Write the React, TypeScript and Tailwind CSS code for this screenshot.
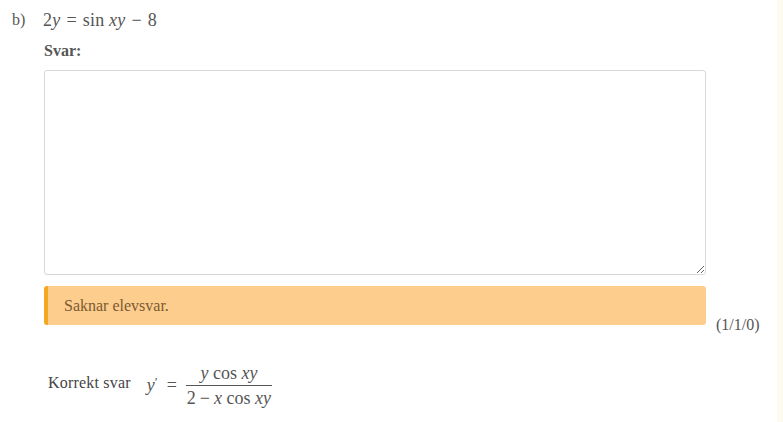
import React from "react";

const serif = { fontFamily: '"Liberation Serif", "Times New Roman", serif' };

function I({ children }: { children: React.ReactNode }) {
  return <span className="italic">{children}</span>;
}

export default function App() {
  return (
    <div className="flex h-[422px] w-[783px] bg-white text-[#555]" style={serif}>
      <div className="flex-1 flex flex-col">
        <div className="flex items-center pt-[8px] h-[32px]">
          <span className="ml-[12px] w-[31px] text-[16px] leading-[24px] text-[#555]">b)</span>
          <span className="text-[18px] leading-[24px] text-[#555] tracking-[0.2px]">
            2<I>y</I>
            <span className="mx-[6px]">=</span>
            sin <I>xy</I>
            <span className="mx-[6px]">−</span>8
          </span>
        </div>
        <div className="ml-[44px] mt-[9px] text-[16px] leading-[20px] font-bold text-[#555]">Svar:</div>
        <div className="ml-[44px] mt-[9px] w-[662px]">
          <textarea
            className="block w-[662px] h-[205px] border border-[#d8d8d8] rounded-[3px] bg-white outline-none"
            style={{ resize: "both" }}
          />
        </div>
        <div className="flex ml-[44px] mt-[11px]">
          <div className="w-[662px] h-[39px] bg-[#fdcd8e] border-l-[4px] border-[#f5a623] rounded-[3px] flex items-center pl-[16px] text-[16px] text-[#7a5a30]">
            Saknar elevsvar.
          </div>
          <div className="ml-[10px] mt-[29px] text-[16px] leading-[20px] text-[#555]">(1/1/0)</div>
        </div>
        <div className="flex items-center ml-[48px] mt-[28px]">
          <span className="text-[16px] leading-[20px] text-[#444] -mt-[6px] tracking-[0.2px]">Korrekt svar</span>
          <span className="ml-[16px] text-[18px] text-[#555] flex items-center">
            <span>
              <I>y</I>
              <span className="text-[13px] align-top">′</span>
            </span>
            <span className="mx-[9px]">=</span>
            <span className="inline-flex flex-col items-center">
              <span className="leading-[20px] px-[1px]">
                <I>y</I> cos <I>xy</I>
              </span>
              <span className="block w-full h-[1px] bg-[#555] my-[2px]" />
              <span className="leading-[20px] px-[1px]">
                2<span className="mx-[4px]">−</span>
                <I>x</I> cos <I>xy</I>
              </span>
            </span>
          </span>
        </div>
      </div>
      <div className="w-[6px] h-full bg-[#fffaf0]" />
    </div>
  );
}
